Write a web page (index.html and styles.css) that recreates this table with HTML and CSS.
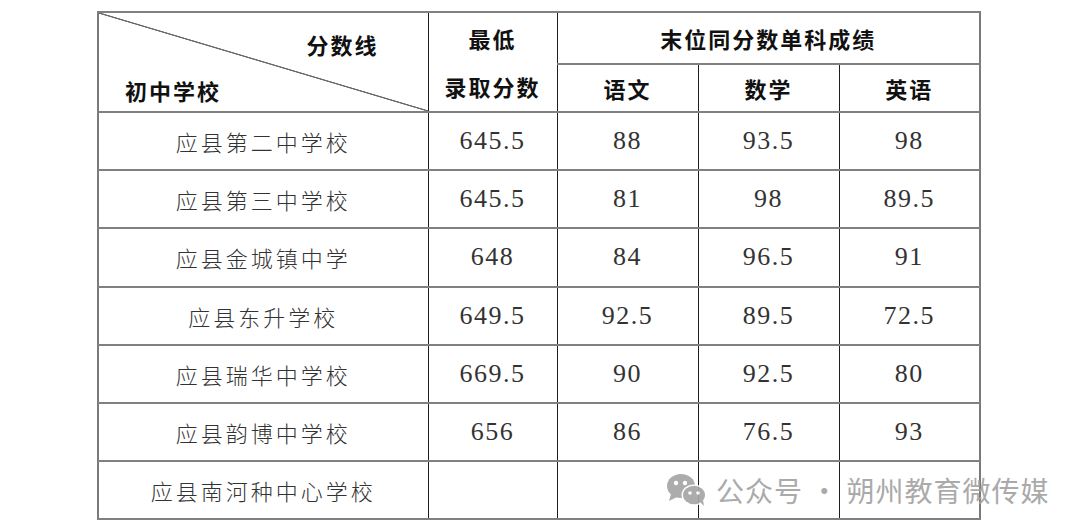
FILE: index.html
```html
<!DOCTYPE html>
<html lang="zh-CN">
<head>
<meta charset="utf-8">
<title>应县初中学校录取分数线</title>
<link rel="stylesheet" href="styles.css">
</head>
<body>
<div class="page">
  <table class="score-table">
    <colgroup>
      <col class="c-school">
      <col class="c-min">
      <col class="c-sub">
      <col class="c-sub">
      <col class="c-sub">
    </colgroup>
    <thead>
      <tr class="h1">
        <th rowspan="2" class="diag">
          <div class="diag-inner">
            <div class="diag-top">分数线</div>
            <div class="diag-bottom">初中学校</div>
          </div>
        </th>
        <th rowspan="2" class="min-head"><div>最低</div><div>录取分数</div></th>
        <th colspan="3" class="group-head">末位同分数单科成绩</th>
      </tr>
      <tr class="h2">
        <th>语文</th>
        <th>数学</th>
        <th>英语</th>
      </tr>
    </thead>
    <tbody>
      <tr><td class="name">应县第二中学校</td><td class="num">645.5</td><td class="num">88</td><td class="num">93.5</td><td class="num">98</td></tr>
      <tr><td class="name">应县第三中学校</td><td class="num">645.5</td><td class="num">81</td><td class="num">98</td><td class="num">89.5</td></tr>
      <tr><td class="name">应县金城镇中学</td><td class="num">648</td><td class="num">84</td><td class="num">96.5</td><td class="num">91</td></tr>
      <tr><td class="name">应县东升学校</td><td class="num">649.5</td><td class="num">92.5</td><td class="num">89.5</td><td class="num">72.5</td></tr>
      <tr><td class="name">应县瑞华中学校</td><td class="num">669.5</td><td class="num">90</td><td class="num">92.5</td><td class="num">80</td></tr>
      <tr><td class="name">应县韵博中学校</td><td class="num">656</td><td class="num">86</td><td class="num">76.5</td><td class="num">93</td></tr>
      <tr><td class="name">应县南河种中心学校</td><td class="num"></td><td class="num"></td><td class="num"></td><td class="num"></td></tr>
    </tbody>
  </table>

  <div class="watermark">
    <svg class="wx" width="42" height="34" viewBox="0 0 42 34">
      <ellipse cx="15" cy="13" rx="14" ry="12" fill="#a6a6a6"/>
      <path d="M5 21 L3 28 L11 24 Z" fill="#a6a6a6"/>
      <circle cx="10" cy="10" r="2.2" fill="#fff"/>
      <circle cx="19" cy="10" r="2.2" fill="#fff"/>
      <ellipse cx="28" cy="22" rx="12.5" ry="10.5" fill="#fff"/>
      <ellipse cx="28" cy="22" rx="11" ry="9.2" fill="#a6a6a6"/>
      <path d="M34 29 L38 33 L37 27 Z" fill="#a6a6a6"/>
      <circle cx="24" cy="20" r="1.8" fill="#fff"/>
      <circle cx="32" cy="20" r="1.8" fill="#fff"/>
    </svg>
    <span class="wm-text">公众号 · 朔州教育微传媒</span>
  </div>
</div>
</body>
</html>
```

FILE: styles.css
```css
html, body {
  margin: 0;
  padding: 0;
  background: #ffffff;
}

.page {
  position: relative;
  width: 1080px;
  height: 532px;
  padding: 11px 0 0 97px;
  box-sizing: border-box;
}

.score-table {
  border-collapse: collapse;
  table-layout: fixed;
  width: 884px;
  border: 2px solid #7a7a7a;
}

.c-school { width: 330px; }
.c-min { width: 129px; }
.c-sub { width: 141px; }

.score-table th,
.score-table td {
  padding: 0;
  border-top: 2px solid #808080;
  border-bottom: 2px solid #808080;
  border-left: 1px solid #1e1e1e;
  border-right: 1px solid #1e1e1e;
  text-align: center;
  vertical-align: middle;
}

.score-table th {
  font-family: "Noto Sans CJK SC", sans-serif;
  font-weight: 700;
  font-size: 22px;
  letter-spacing: 2px;
  color: #111111;
}

.h1 { height: 51px; }
.h2 { height: 48px; }

.score-table tbody tr { height: 58.2px; }

.diag {
  background: linear-gradient(to top right,
    transparent calc(50% - 1px),
    #6a6a6a calc(50% - 0.4px),
    #6a6a6a calc(50% + 0.4px),
    transparent calc(50% + 1px));
}

.diag-inner {
  display: flex;
  flex-direction: column;
  justify-content: space-between;
  height: 98px;
  box-sizing: border-box;
  padding: 18px 49px 8px 26px;
}

.diag-top {
  text-align: right;
  line-height: 26px;
}

.diag-bottom {
  text-align: left;
  line-height: 26px;
}

.min-head div {
  line-height: 48px;
}

.min-head {
  padding-bottom: 2px;
}

.group-head {
  padding-bottom: 2px;
}

.name {
  font-family: "Noto Sans CJK SC", sans-serif;
  font-weight: 300;
  font-size: 22px;
  letter-spacing: 3px;
  color: #333333;
}

.score-table td.num {
  font-family: "Liberation Serif", "DejaVu Serif", serif;
  font-size: 26px;
  letter-spacing: 1.5px;
  color: #333333;
}

.watermark {
  position: absolute;
  left: 666px;
  top: 470px;
  display: flex;
  align-items: center;
  gap: 8px;
  opacity: 0.92;
}

.wx {
  display: block;
}

.wm-text {
  font-family: "Noto Sans CJK SC", sans-serif;
  font-size: 28px;
  letter-spacing: 1px;
  color: #a3a3a3;
  white-space: pre;
}
```
